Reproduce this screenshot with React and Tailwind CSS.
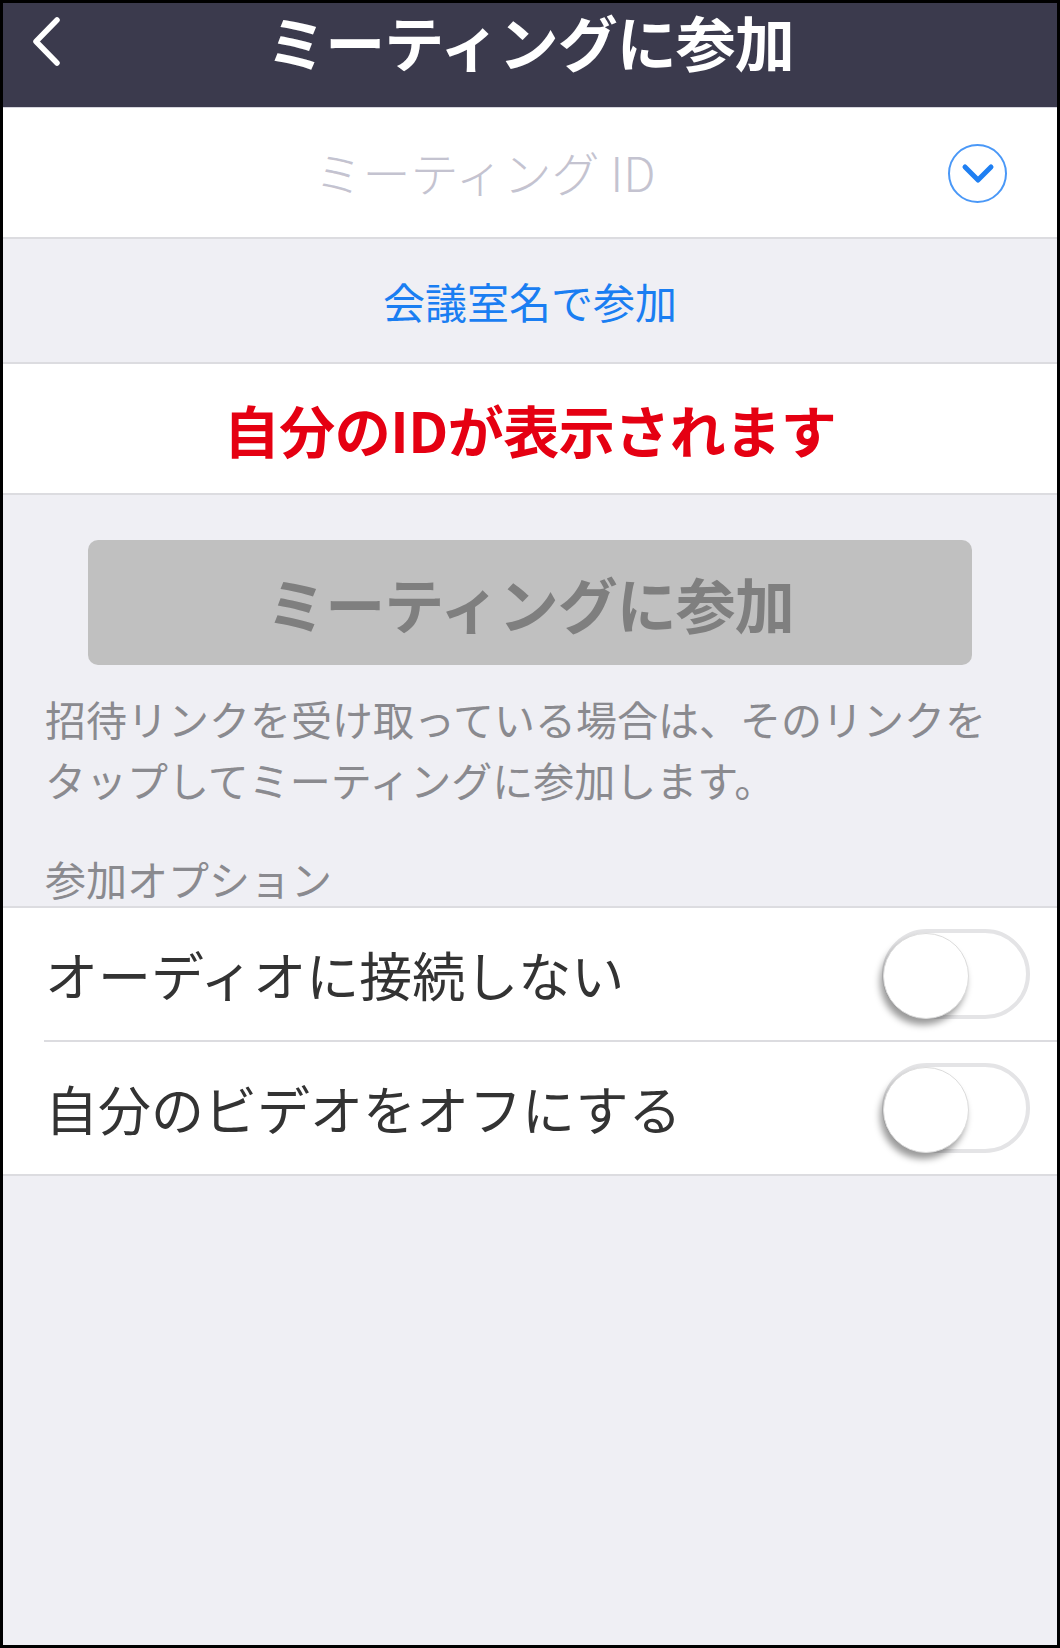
import React, { useState } from 'react';

const FONT = { fontFamily: '"Noto Sans CJK JP", "Noto Sans", sans-serif' };

function Toggle({ on, onChange }) {
  return (
    <button type="button" onClick={() => onChange(!on)}
      className="relative w-[148px] h-[90px] rounded-full border-[4px] border-[#e4e4e6] bg-white flex-shrink-0">
      <span className={`absolute top-[0px] ${on ? 'left-[56px]' : 'left-[-3px]'} w-[86px] h-[86px] rounded-full bg-white border border-[#dcdcdc] shadow-[-3px_6px_7px_rgba(0,0,0,0.4)]`} />
    </button>
  );
}

export default function App() {
  const [noAudio, setNoAudio] = useState(false);
  const [videoOff, setVideoOff] = useState(false);

  return (
    <div style={FONT} className="w-[1060px] h-[1648px] border-[3px] border-black bg-[#efeff4] flex flex-col">
      {/* Header */}
      <div className="h-[104px] bg-[#3b3a4d] grid grid-cols-[1fr_auto_1fr] items-start pt-[8px]">
        <div className="pl-[24px] pt-[5px]">
          <svg width="40" height="52" viewBox="0 0 40 52" fill="none">
            <path d="M30 4 L9 25.5 L30 47" stroke="white" strokeWidth="5.5" strokeLinecap="round" strokeLinejoin="round" />
          </svg>
        </div>
        <h1 className="text-white font-bold text-[60px] leading-[60px] tracking-[-1px]">ミーティングに参加</h1>
        <div />
      </div>

      {/* Meeting ID */}
      <div className="h-[132px] bg-white border-t border-[#d6d5de] border-b-2 border-b-[#dcdce0] flex items-center relative">
        <div className="flex-1 text-center pr-[90px] text-[48px] font-light text-[#c4c3d0] leading-none pb-[4px]">ミーティング ID</div>
        <button type="button" className="absolute right-[50px] top-[36px] w-[59px] h-[59px] rounded-full border-2 border-[#4a98f7] flex items-center justify-center">
          <svg width="34" height="22" viewBox="0 0 34 22" fill="none">
            <path d="M4 4 L17 17 L30 4" stroke="#1f7ff2" strokeWidth="5" strokeLinecap="round" strokeLinejoin="round" />
          </svg>
        </button>
      </div>

      {/* Join by room name */}
      <div className="h-[125px] flex items-center justify-center border-b-2 border-[#dcdce0]">
        <span className="text-[42px] text-[#1a7ef2] leading-none">会議室名で参加</span>
      </div>

      {/* Own ID */}
      <div className="h-[131px] bg-white flex items-center justify-center border-b-2 border-[#dcdce0]">
        <span className="text-[56px] font-bold text-[#e50012] leading-none tracking-[-0.5px]">自分のIDが表示されます</span>
      </div>

      {/* Join button */}
      <div className="px-[85px] pt-[45px]">
        <button type="button" disabled
          className="w-full h-[125px] rounded-[10px] bg-[#c0c0c0] text-[#7f7f7f] font-bold text-[60px] leading-none tracking-[-1px]">
          ミーティングに参加
        </button>
      </div>

      <p className="px-[42px] pt-[23px] text-[41px] leading-[61px] text-[#8a8a8f]">
        招待リンクを受け取っている場合は、そのリンクをタップしてミーティングに参加します。
      </p>

      <div className="px-[42px] pt-[48px] pb-[7px] text-[41px] leading-[41px] text-[#8a8a8f]">参加オプション</div>

      {/* Options */}
      <div className="bg-white border-y-2 border-[#dcdce0]">
        <div className="h-[132px] flex items-center justify-between pl-[42px] pr-[27px]">
          <span className="text-[53px] text-[#333333] leading-none">オーディオに接続しない</span>
          <Toggle on={noAudio} onChange={setNoAudio} />
        </div>
        <div className="ml-[41px] border-t-2 border-[#dcdce0]" />
        <div className="h-[132px] flex items-center justify-between pl-[42px] pr-[27px]">
          <span className="text-[53px] text-[#333333] leading-none">自分のビデオをオフにする</span>
          <Toggle on={videoOff} onChange={setVideoOff} />
        </div>
      </div>
    </div>
  );
}
